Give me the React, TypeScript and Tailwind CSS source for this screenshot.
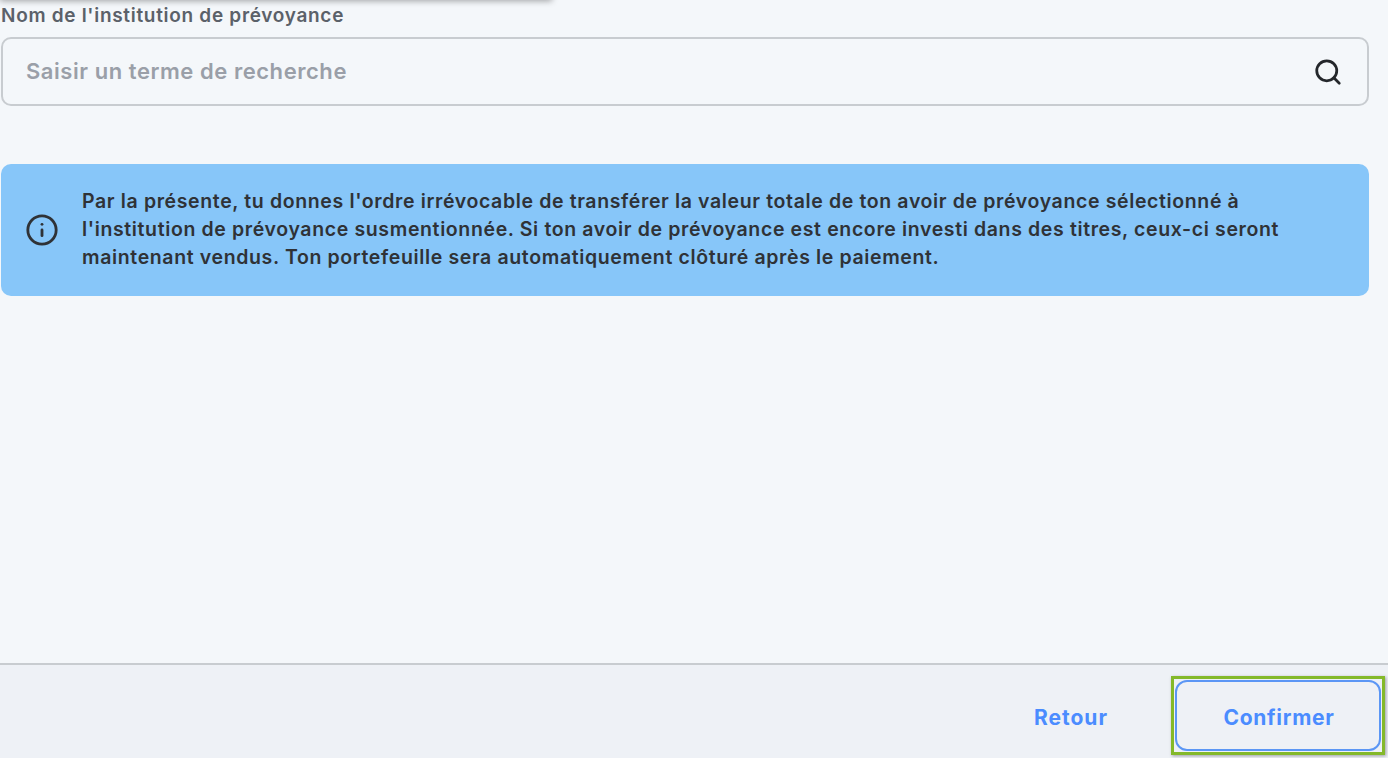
import { Info, Search } from "lucide-react";

const App = () => {
  return (
    <div className="relative flex h-[758px] flex-col overflow-hidden bg-[#f4f7fa] font-['Inter',sans-serif] text-[#2f3237]">
      {/* bottom edge of the menu that sits above this form */}
      <div className="absolute left-0 top-[-20px] h-5 w-[552px] shadow-[0_1px_6px_rgba(0,0,0,0.35)]" />

      <main className="flex flex-1 flex-col pl-[1px] pr-[19px]">
        <label className="mt-[4px] h-[24px] text-[19px] font-semibold leading-[24px] tracking-[0.7px] text-[#5b6169]">
          Nom de l'institution de prévoyance
        </label>
        <div className="mt-[9px] flex h-[69px] items-center justify-between rounded-[10px] border-2 border-[#c8ccd0] pl-[23px] pr-[24px]">
          <span className="text-[22px] font-semibold tracking-[0.55px] text-[#9a9fa8]">Saisir un terme de recherche</span>
          <Search className="h-[30px] w-[30px] text-[#24272b]" strokeWidth={2.2} />
        </div>
        <div className="mt-[58px] flex h-[132px] items-center gap-[23px] rounded-[10px] bg-[#87c6f9] pl-[24px] pr-[60px]">
          <Info className="h-[34px] w-[34px] shrink-0" strokeWidth={2} />
          <p className="pb-[2px] text-[19.5px] font-semibold leading-[28px] tracking-[0.63px]">
            Par la présente, tu donnes l'ordre irrévocable de transférer la valeur totale de ton avoir de prévoyance
            sélectionné à l'institution de prévoyance susmentionnée. Si ton avoir de prévoyance est encore investi dans
            des titres, ceux-ci seront maintenant vendus. Ton portefeuille sera automatiquement clôturé après le
            paiement.
          </p>
        </div>
      </main>

      <footer className="flex h-[95px] items-end justify-end border-t-2 border-[#c8ccd0] bg-[#eef1f6] pb-[3px] pr-[3px] text-[21px] font-bold tracking-[0.7px] text-[#4b8cff]">
        <div className="flex items-center">
          <button className="mr-[63px] pt-[4px] tracking-[1px]">Retour</button>
          <div className="border-[3px] border-[#84b92a] p-[1px] shadow-[1px_1px_3px_rgba(0,0,0,0.35)]">
            <button className="block h-[71px] w-[206px] rounded-[12px] border-2 border-[#5b96f5] pl-[2px] pt-[4px]">
              Confirmer
            </button>
          </div>
        </div>
      </footer>
    </div>
  );
};

export default App;
